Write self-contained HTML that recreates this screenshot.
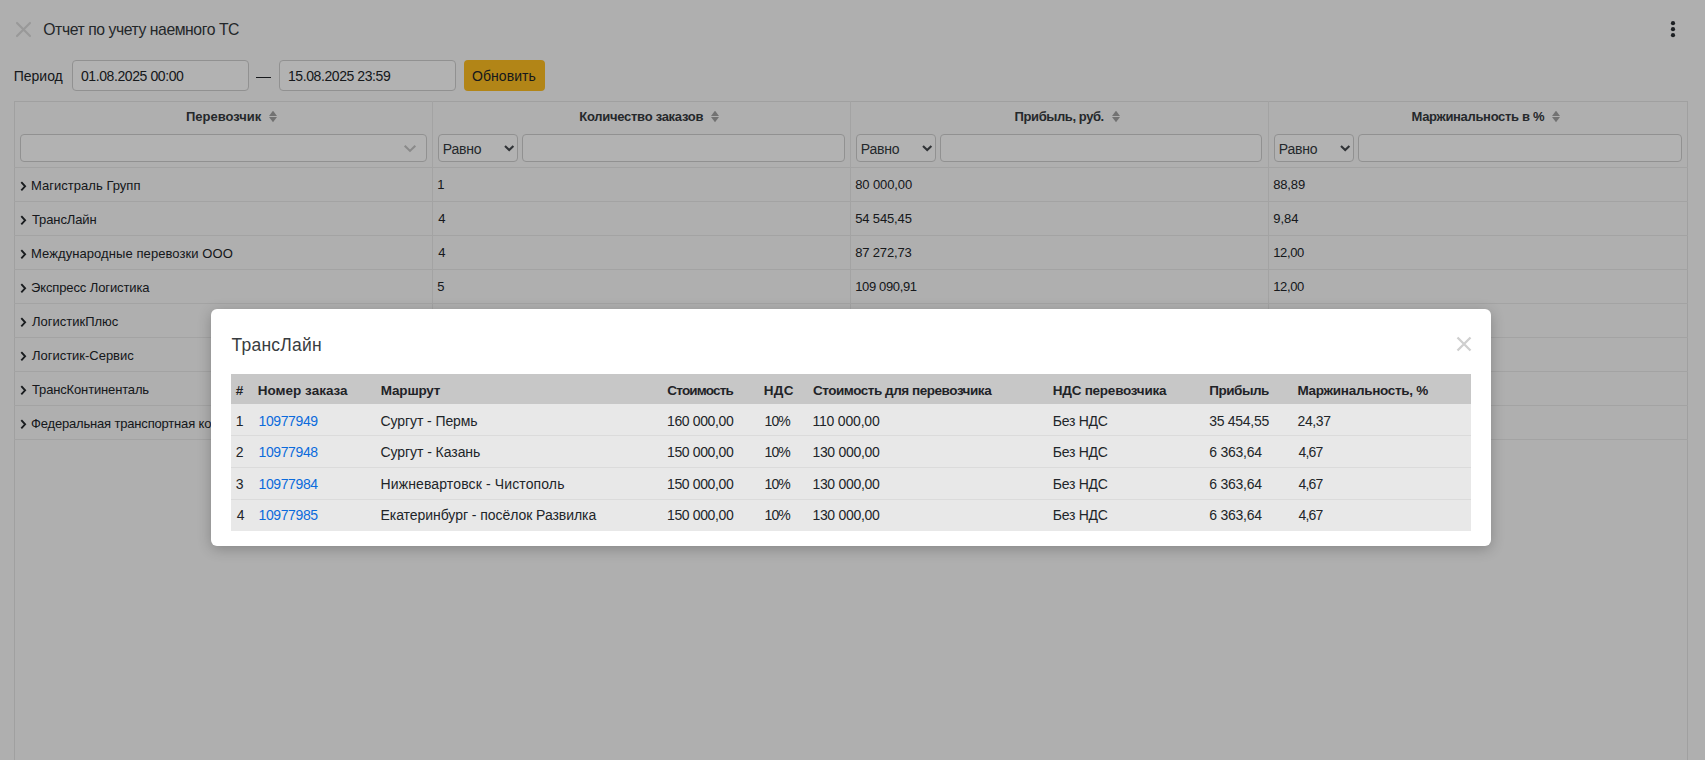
<!DOCTYPE html>
<html lang="ru">
<head>
<meta charset="utf-8">
<title>Отчет по учету наемного ТС</title>
<style>
*{box-sizing:border-box;margin:0;padding:0}
html,body{width:1705px;height:760px;overflow:hidden}
body{position:relative;background:#fbfbfb;font-family:"Liberation Sans",sans-serif;color:#212529}
.abs{position:absolute}
.t{position:absolute;white-space:nowrap}
</style>
</head>
<body>
<svg class="abs" style="left:14px;top:20px" width="19" height="19" viewBox="0 0 19 19"><path d="M3 3L16 16M16 3L3 16" stroke="#dcdcdc" stroke-width="2.2" stroke-linecap="round"/></svg>
<div class="t" style="left:43.30px;top:21.67px;font-size:15.75px;line-height:15.75px;color:#33383c;letter-spacing:-0.440px">Отчет по учету наемного ТС</div>
<svg class="abs" style="left:1669px;top:20px" width="8" height="18" viewBox="0 0 8 18"><circle cx="4" cy="3.2" r="2.1" fill="#2a2e33"/><circle cx="4" cy="9.2" r="2.1" fill="#2a2e33"/><circle cx="4" cy="15.2" r="2.1" fill="#2a2e33"/></svg>
<div class="t" style="left:13.70px;top:69.15px;font-size:14px;line-height:14px">Период</div>
<div class="abs" style="left:72px;top:60px;width:177px;height:31px;border:1px solid #d0d0d0;border-radius:4px;background:#fff"></div>
<div class="t" style="left:80.90px;top:69.15px;font-size:14px;line-height:14px;letter-spacing:-0.400px">01.08.2025 00:00</div>
<div class="abs" style="left:256px;top:77px;width:15px;height:1px;background:#212529"></div>
<div class="abs" style="left:279px;top:60px;width:177px;height:31px;border:1px solid #d0d0d0;border-radius:4px;background:#fff"></div>
<div class="t" style="left:288.00px;top:69.15px;font-size:14px;line-height:14px;letter-spacing:-0.420px">15.08.2025 23:59</div>
<div class="abs" style="left:464px;top:60px;width:81px;height:31px;background:#ffbf22;border-radius:4px"></div>
<div class="t" style="left:472.00px;top:69.15px;font-size:14px;line-height:14px;letter-spacing:0.057px">Обновить</div>
<div class="abs" style="left:14px;top:101px;width:1674px;height:669px;border:1px solid #e6e6e6"></div>
<div class="abs" style="left:432px;top:101px;width:1px;height:339px;background:#eaeaea"></div>
<div class="abs" style="left:850px;top:101px;width:1px;height:339px;background:#eaeaea"></div>
<div class="abs" style="left:1268px;top:101px;width:1px;height:339px;background:#eaeaea"></div>
<div class="abs" style="left:14px;top:167px;width:1674px;height:1px;background:#eaeaea"></div>
<div class="t" style="left:186.00px;top:110.00px;font-size:13px;line-height:13px;font-weight:700;color:#363a3e">Перевозчик</div>
<svg class="abs" style="left:269px;top:111px" width="9" height="12" viewBox="0 0 9 12"><path d="M4 -0.3L8 5H0Z" fill="#a4a4a4"/><path d="M0 6H8L4 11.2Z" fill="#a4a4a4"/></svg>
<div class="t" style="left:579.30px;top:110.00px;font-size:13px;line-height:13px;font-weight:700;color:#363a3e;letter-spacing:-0.276px">Количество заказов</div>
<svg class="abs" style="left:711px;top:111px" width="9" height="12" viewBox="0 0 9 12"><path d="M4 -0.3L8 5H0Z" fill="#a4a4a4"/><path d="M0 6H8L4 11.2Z" fill="#a4a4a4"/></svg>
<div class="t" style="left:1014.60px;top:110.00px;font-size:13px;line-height:13px;font-weight:700;color:#363a3e;letter-spacing:-0.408px">Прибыль, руб.</div>
<svg class="abs" style="left:1112px;top:111px" width="9" height="12" viewBox="0 0 9 12"><path d="M4 -0.3L8 5H0Z" fill="#a4a4a4"/><path d="M0 6H8L4 11.2Z" fill="#a4a4a4"/></svg>
<div class="t" style="left:1411.50px;top:110.00px;font-size:13px;line-height:13px;font-weight:700;color:#363a3e;letter-spacing:-0.324px">Маржинальность в %</div>
<svg class="abs" style="left:1552px;top:111px" width="9" height="12" viewBox="0 0 9 12"><path d="M4 -0.3L8 5H0Z" fill="#a4a4a4"/><path d="M0 6H8L4 11.2Z" fill="#a4a4a4"/></svg>
<div class="abs" style="left:20px;top:134px;width:407px;height:28px;border:1px solid #d0d0d0;border-radius:4px;background:#fff"></div>
<svg class="abs" style="left:403px;top:144px" width="14" height="9" viewBox="0 0 14 9"><path d="M1.7 1.7L7 6.9L12.3 1.7" stroke="#c6c6c6" stroke-width="2.1" fill="none"/></svg>
<div class="abs" style="left:438px;top:134px;width:80px;height:28px;border:1px solid #d0d0d0;border-radius:4px;background:#fff"></div>
<div class="t" style="left:442.80px;top:142.05px;font-size:14px;line-height:14px;color:#343a40;letter-spacing:-0.200px">Равно</div>
<svg class="abs" style="left:503px;top:143.5px" width="12" height="9" viewBox="0 0 12 9"><path d="M2 2L6.2 6.1L10.4 2" stroke="#464a4f" stroke-width="2.1" fill="none"/></svg>
<div class="abs" style="left:522px;top:134px;width:323px;height:28px;border:1px solid #d0d0d0;border-radius:4px;background:#fff"></div>
<div class="abs" style="left:856px;top:134px;width:80px;height:28px;border:1px solid #d0d0d0;border-radius:4px;background:#fff"></div>
<div class="t" style="left:860.80px;top:142.05px;font-size:14px;line-height:14px;color:#343a40;letter-spacing:-0.200px">Равно</div>
<svg class="abs" style="left:921px;top:143.5px" width="12" height="9" viewBox="0 0 12 9"><path d="M2 2L6.2 6.1L10.4 2" stroke="#464a4f" stroke-width="2.1" fill="none"/></svg>
<div class="abs" style="left:940px;top:134px;width:322px;height:28px;border:1px solid #d0d0d0;border-radius:4px;background:#fff"></div>
<div class="abs" style="left:1274px;top:134px;width:80px;height:28px;border:1px solid #d0d0d0;border-radius:4px;background:#fff"></div>
<div class="t" style="left:1278.80px;top:142.05px;font-size:14px;line-height:14px;color:#343a40;letter-spacing:-0.200px">Равно</div>
<svg class="abs" style="left:1339px;top:143.5px" width="12" height="9" viewBox="0 0 12 9"><path d="M2 2L6.2 6.1L10.4 2" stroke="#464a4f" stroke-width="2.1" fill="none"/></svg>
<div class="abs" style="left:1358px;top:134px;width:324px;height:28px;border:1px solid #d0d0d0;border-radius:4px;background:#fff"></div>
<div class="abs" style="left:14px;top:201px;width:1674px;height:1px;background:#eaeaea"></div>
<svg class="abs" style="left:20px;top:180.5px" width="7" height="11" viewBox="0 0 7 11"><path d="M1.3 1.2L5.1 5.3L1.3 9.4" stroke="#25292d" stroke-width="1.9" fill="none"/></svg>
<div class="t" style="left:31.00px;top:179.00px;font-size:13px;line-height:13px;letter-spacing:0.027px">Магистраль Групп</div>
<div class="t" style="left:437.20px;top:177.70px;font-size:13px;line-height:13px">1</div>
<div class="t" style="left:855.20px;top:177.70px;font-size:13px;line-height:13px;letter-spacing:-0.100px">80 000,00</div>
<div class="t" style="left:1273.20px;top:177.70px;font-size:13px;line-height:13px;letter-spacing:-0.150px">88,89</div>
<div class="abs" style="left:14px;top:235px;width:1674px;height:1px;background:#eaeaea"></div>
<svg class="abs" style="left:20px;top:214.5px" width="7" height="11" viewBox="0 0 7 11"><path d="M1.3 1.2L5.1 5.3L1.3 9.4" stroke="#25292d" stroke-width="1.9" fill="none"/></svg>
<div class="t" style="left:32.00px;top:213.00px;font-size:13px;line-height:13px;letter-spacing:-0.113px">ТрансЛайн</div>
<div class="t" style="left:438.20px;top:211.70px;font-size:13px;line-height:13px">4</div>
<div class="t" style="left:855.20px;top:211.70px;font-size:13px;line-height:13px;letter-spacing:-0.138px">54 545,45</div>
<div class="t" style="left:1273.20px;top:211.70px;font-size:13px;line-height:13px">9,84</div>
<div class="abs" style="left:14px;top:269px;width:1674px;height:1px;background:#eaeaea"></div>
<svg class="abs" style="left:20px;top:248.5px" width="7" height="11" viewBox="0 0 7 11"><path d="M1.3 1.2L5.1 5.3L1.3 9.4" stroke="#25292d" stroke-width="1.9" fill="none"/></svg>
<div class="t" style="left:31.00px;top:247.00px;font-size:13px;line-height:13px;letter-spacing:0.077px">Международные перевозки ООО</div>
<div class="t" style="left:438.20px;top:245.70px;font-size:13px;line-height:13px">4</div>
<div class="t" style="left:855.20px;top:245.70px;font-size:13px;line-height:13px;letter-spacing:-0.162px">87 272,73</div>
<div class="t" style="left:1273.20px;top:245.70px;font-size:13px;line-height:13px;letter-spacing:-0.375px">12,00</div>
<div class="abs" style="left:14px;top:303px;width:1674px;height:1px;background:#eaeaea"></div>
<svg class="abs" style="left:20px;top:282.5px" width="7" height="11" viewBox="0 0 7 11"><path d="M1.3 1.2L5.1 5.3L1.3 9.4" stroke="#25292d" stroke-width="1.9" fill="none"/></svg>
<div class="t" style="left:31.00px;top:281.00px;font-size:13px;line-height:13px;letter-spacing:-0.118px">Экспресс Логистика</div>
<div class="t" style="left:437.20px;top:279.70px;font-size:13px;line-height:13px">5</div>
<div class="t" style="left:855.20px;top:279.70px;font-size:13px;line-height:13px;letter-spacing:-0.356px">109 090,91</div>
<div class="t" style="left:1273.20px;top:279.70px;font-size:13px;line-height:13px;letter-spacing:-0.375px">12,00</div>
<div class="abs" style="left:14px;top:337px;width:1674px;height:1px;background:#eaeaea"></div>
<svg class="abs" style="left:20px;top:316.5px" width="7" height="11" viewBox="0 0 7 11"><path d="M1.3 1.2L5.1 5.3L1.3 9.4" stroke="#25292d" stroke-width="1.9" fill="none"/></svg>
<div class="t" style="left:32.00px;top:315.00px;font-size:13px;line-height:13px">ЛогистикПлюс</div>
<div class="abs" style="left:14px;top:371px;width:1674px;height:1px;background:#eaeaea"></div>
<svg class="abs" style="left:20px;top:350.5px" width="7" height="11" viewBox="0 0 7 11"><path d="M1.3 1.2L5.1 5.3L1.3 9.4" stroke="#25292d" stroke-width="1.9" fill="none"/></svg>
<div class="t" style="left:32.00px;top:349.00px;font-size:13px;line-height:13px;letter-spacing:-0.021px">Логистик-Сервис</div>
<div class="abs" style="left:14px;top:405px;width:1674px;height:1px;background:#eaeaea"></div>
<svg class="abs" style="left:20px;top:384.5px" width="7" height="11" viewBox="0 0 7 11"><path d="M1.3 1.2L5.1 5.3L1.3 9.4" stroke="#25292d" stroke-width="1.9" fill="none"/></svg>
<div class="t" style="left:32.00px;top:383.00px;font-size:13px;line-height:13px;letter-spacing:-0.150px">ТрансКонтиненталь</div>
<div class="abs" style="left:14px;top:439px;width:1674px;height:1px;background:#eaeaea"></div>
<svg class="abs" style="left:20px;top:418.5px" width="7" height="11" viewBox="0 0 7 11"><path d="M1.3 1.2L5.1 5.3L1.3 9.4" stroke="#25292d" stroke-width="1.9" fill="none"/></svg>
<div class="t" style="left:31.00px;top:417.00px;font-size:13px;line-height:13px;letter-spacing:-0.175px">Федеральная транспортная компания</div>
<div class="abs" style="left:0px;top:0px;width:1705px;height:760px;background:rgba(0,0,0,0.3)"></div>
<div class="abs" style="left:211px;top:309px;width:1280px;height:237px;background:#fff;border-radius:6px;box-shadow:0 3px 14px rgba(0,0,0,.24)"></div>
<div class="t" style="left:231.60px;top:336.99px;font-size:17.5px;line-height:17.5px;color:#383c40;letter-spacing:0.213px">ТрансЛайн</div>
<svg class="abs" style="left:1455px;top:335px" width="18" height="18" viewBox="0 0 18 18"><path d="M2.5 2.5L15.5 15.5M15.5 2.5L2.5 15.5" stroke="#cfcfcf" stroke-width="2.3"/></svg>
<div class="abs" style="left:231px;top:374px;width:1240px;height:30px;background:#c7c7c7"></div>
<div class="abs" style="left:231px;top:404px;width:1240px;height:31px;background:#e8e8e8"></div>
<div class="abs" style="left:231px;top:435px;width:1240px;height:32px;background:#e8e8e8"></div>
<div class="abs" style="left:231px;top:435px;width:1240px;height:1px;background:#dbdbdb"></div>
<div class="abs" style="left:231px;top:467px;width:1240px;height:32px;background:#e8e8e8"></div>
<div class="abs" style="left:231px;top:467px;width:1240px;height:1px;background:#dbdbdb"></div>
<div class="abs" style="left:231px;top:499px;width:1240px;height:32px;background:#e8e8e8"></div>
<div class="abs" style="left:231px;top:499px;width:1240px;height:1px;background:#dbdbdb"></div>
<div class="t" style="left:235.80px;top:383.67px;font-size:13.5px;line-height:13.5px;font-weight:700;color:#1f2327">#</div>
<div class="t" style="left:257.80px;top:383.67px;font-size:13.5px;line-height:13.5px;font-weight:700;color:#1f2327">Номер заказа</div>
<div class="t" style="left:380.80px;top:383.67px;font-size:13.5px;line-height:13.5px;font-weight:700;color:#1f2327;letter-spacing:-0.183px">Маршрут</div>
<div class="t" style="left:667.30px;top:383.67px;font-size:13.5px;line-height:13.5px;font-weight:700;color:#1f2327;letter-spacing:-0.800px">Стоимость</div>
<div class="t" style="left:763.70px;top:383.67px;font-size:13.5px;line-height:13.5px;font-weight:700;color:#1f2327;letter-spacing:0.300px">НДС</div>
<div class="t" style="left:812.90px;top:383.67px;font-size:13.5px;line-height:13.5px;font-weight:700;color:#1f2327;letter-spacing:-0.458px">Стоимость для перевозчика</div>
<div class="t" style="left:1052.80px;top:383.67px;font-size:13.5px;line-height:13.5px;font-weight:700;color:#1f2327;letter-spacing:-0.243px">НДС перевозчика</div>
<div class="t" style="left:1209.20px;top:383.67px;font-size:13.5px;line-height:13.5px;font-weight:700;color:#1f2327;letter-spacing:-0.467px">Прибыль</div>
<div class="t" style="left:1297.50px;top:383.67px;font-size:13.5px;line-height:13.5px;font-weight:700;color:#1f2327;letter-spacing:-0.300px">Маржинальность, %</div>
<div class="t" style="left:235.80px;top:413.95px;font-size:14px;line-height:14px">1</div>
<div class="t" style="left:258.50px;top:413.95px;font-size:14px;line-height:14px;color:#0b6bdc;letter-spacing:-0.386px">10977949</div>
<div class="t" style="left:380.50px;top:413.95px;font-size:14px;line-height:14px;letter-spacing:-0.085px">Сургут - Пермь</div>
<div class="t" style="left:667.00px;top:413.95px;font-size:14px;line-height:14px;letter-spacing:-0.367px">160 000,00</div>
<div class="t" style="left:764.60px;top:413.95px;font-size:14px;line-height:14px;letter-spacing:-0.900px">10%</div>
<div class="t" style="left:812.40px;top:413.95px;font-size:14px;line-height:14px;letter-spacing:-0.189px">110 000,00</div>
<div class="t" style="left:1052.80px;top:413.95px;font-size:14px;line-height:14px;letter-spacing:-0.283px">Без НДС</div>
<div class="t" style="left:1209.20px;top:413.95px;font-size:14px;line-height:14px;letter-spacing:-0.275px">35 454,55</div>
<div class="t" style="left:1297.50px;top:413.95px;font-size:14px;line-height:14px;letter-spacing:-0.375px">24,37</div>
<div class="t" style="left:235.80px;top:445.40px;font-size:14px;line-height:14px">2</div>
<div class="t" style="left:258.50px;top:445.40px;font-size:14px;line-height:14px;color:#0b6bdc;letter-spacing:-0.386px">10977948</div>
<div class="t" style="left:380.50px;top:445.40px;font-size:14px;line-height:14px;letter-spacing:-0.064px">Сургут - Казань</div>
<div class="t" style="left:667.00px;top:445.40px;font-size:14px;line-height:14px;letter-spacing:-0.367px">150 000,00</div>
<div class="t" style="left:764.60px;top:445.40px;font-size:14px;line-height:14px;letter-spacing:-0.900px">10%</div>
<div class="t" style="left:812.40px;top:445.40px;font-size:14px;line-height:14px;letter-spacing:-0.300px">130 000,00</div>
<div class="t" style="left:1052.80px;top:445.40px;font-size:14px;line-height:14px;letter-spacing:-0.283px">Без НДС</div>
<div class="t" style="left:1209.20px;top:445.40px;font-size:14px;line-height:14px;letter-spacing:-0.243px">6 363,64</div>
<div class="t" style="left:1298.50px;top:445.40px;font-size:14px;line-height:14px;letter-spacing:-0.800px">4,67</div>
<div class="t" style="left:235.80px;top:476.85px;font-size:14px;line-height:14px">3</div>
<div class="t" style="left:258.50px;top:476.85px;font-size:14px;line-height:14px;color:#0b6bdc;letter-spacing:-0.386px">10977984</div>
<div class="t" style="left:380.50px;top:476.85px;font-size:14px;line-height:14px;letter-spacing:0.125px">Нижневартовск - Чистополь</div>
<div class="t" style="left:667.00px;top:476.85px;font-size:14px;line-height:14px;letter-spacing:-0.367px">150 000,00</div>
<div class="t" style="left:764.60px;top:476.85px;font-size:14px;line-height:14px;letter-spacing:-0.900px">10%</div>
<div class="t" style="left:812.40px;top:476.85px;font-size:14px;line-height:14px;letter-spacing:-0.300px">130 000,00</div>
<div class="t" style="left:1052.80px;top:476.85px;font-size:14px;line-height:14px;letter-spacing:-0.283px">Без НДС</div>
<div class="t" style="left:1209.20px;top:476.85px;font-size:14px;line-height:14px;letter-spacing:-0.243px">6 363,64</div>
<div class="t" style="left:1298.50px;top:476.85px;font-size:14px;line-height:14px;letter-spacing:-0.800px">4,67</div>
<div class="t" style="left:236.80px;top:508.30px;font-size:14px;line-height:14px">4</div>
<div class="t" style="left:258.50px;top:508.30px;font-size:14px;line-height:14px;color:#0b6bdc;letter-spacing:-0.386px">10977985</div>
<div class="t" style="left:380.50px;top:508.30px;font-size:14px;line-height:14px;letter-spacing:-0.053px">Екатеринбург - посёлок Развилка</div>
<div class="t" style="left:667.00px;top:508.30px;font-size:14px;line-height:14px;letter-spacing:-0.367px">150 000,00</div>
<div class="t" style="left:764.60px;top:508.30px;font-size:14px;line-height:14px;letter-spacing:-0.900px">10%</div>
<div class="t" style="left:812.40px;top:508.30px;font-size:14px;line-height:14px;letter-spacing:-0.300px">130 000,00</div>
<div class="t" style="left:1052.80px;top:508.30px;font-size:14px;line-height:14px;letter-spacing:-0.283px">Без НДС</div>
<div class="t" style="left:1209.20px;top:508.30px;font-size:14px;line-height:14px;letter-spacing:-0.243px">6 363,64</div>
<div class="t" style="left:1298.50px;top:508.30px;font-size:14px;line-height:14px;letter-spacing:-0.800px">4,67</div>
</body>
</html>
